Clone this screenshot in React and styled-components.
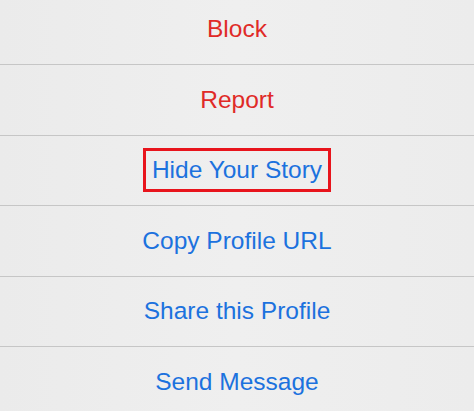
import styled, { createGlobalStyle } from 'styled-components'

const Global = createGlobalStyle`
  html, body {
    margin: 0;
    padding: 0;
    background: #eeeeee;
  }
  body {
    font-family: "Liberation Sans", Arial, sans-serif;
    overflow: hidden;
  }
`

const items = [
  { label: 'Block', danger: true },
  { label: 'Report', danger: true },
  { label: 'Hide Your Story', boxed: true },
  { label: 'Copy Profile URL' },
  { label: 'Share this Profile' },
  { label: 'Send Message' },
]

export default function App() {
  return <>
    <Global />
    <Sheet>
      {items.map(item => (
        <Row key={item.label}>
          <Label $danger={item.danger} $boxed={item.boxed}>{item.label}</Label>
        </Row>
      ))}
    </Sheet>
  </>
}

const Sheet = styled.div`
  display: flex;
  flex-direction: column;
  width: 474px;
  height: 411px;
  background: linear-gradient(90deg, #ebebeb 0%, #efefef 50%, #ececec 100%);
  overflow: hidden;
`

const Row = styled.div`
  display: flex;
  align-items: center;
  justify-content: center;
  flex: none;
  height: 70.5px;
  box-sizing: border-box;
  border-bottom: 1px solid #c6c6c6;
  &:first-child {
    margin-top: -5.5px;
  }
  &:last-child {
    border-bottom: none;
  }
`

const Label = styled.span`
  display: inline-block;
  font-size: 24.5px;
  line-height: 30px;
  color: ${p => p.$danger ? '#e02a27' : '#1c72de'};
  padding: ${p => p.$boxed ? '4px 6px 4px 6px' : '0'};
  border: ${p => p.$boxed ? '3px solid #e8141c' : 'none'};
`
